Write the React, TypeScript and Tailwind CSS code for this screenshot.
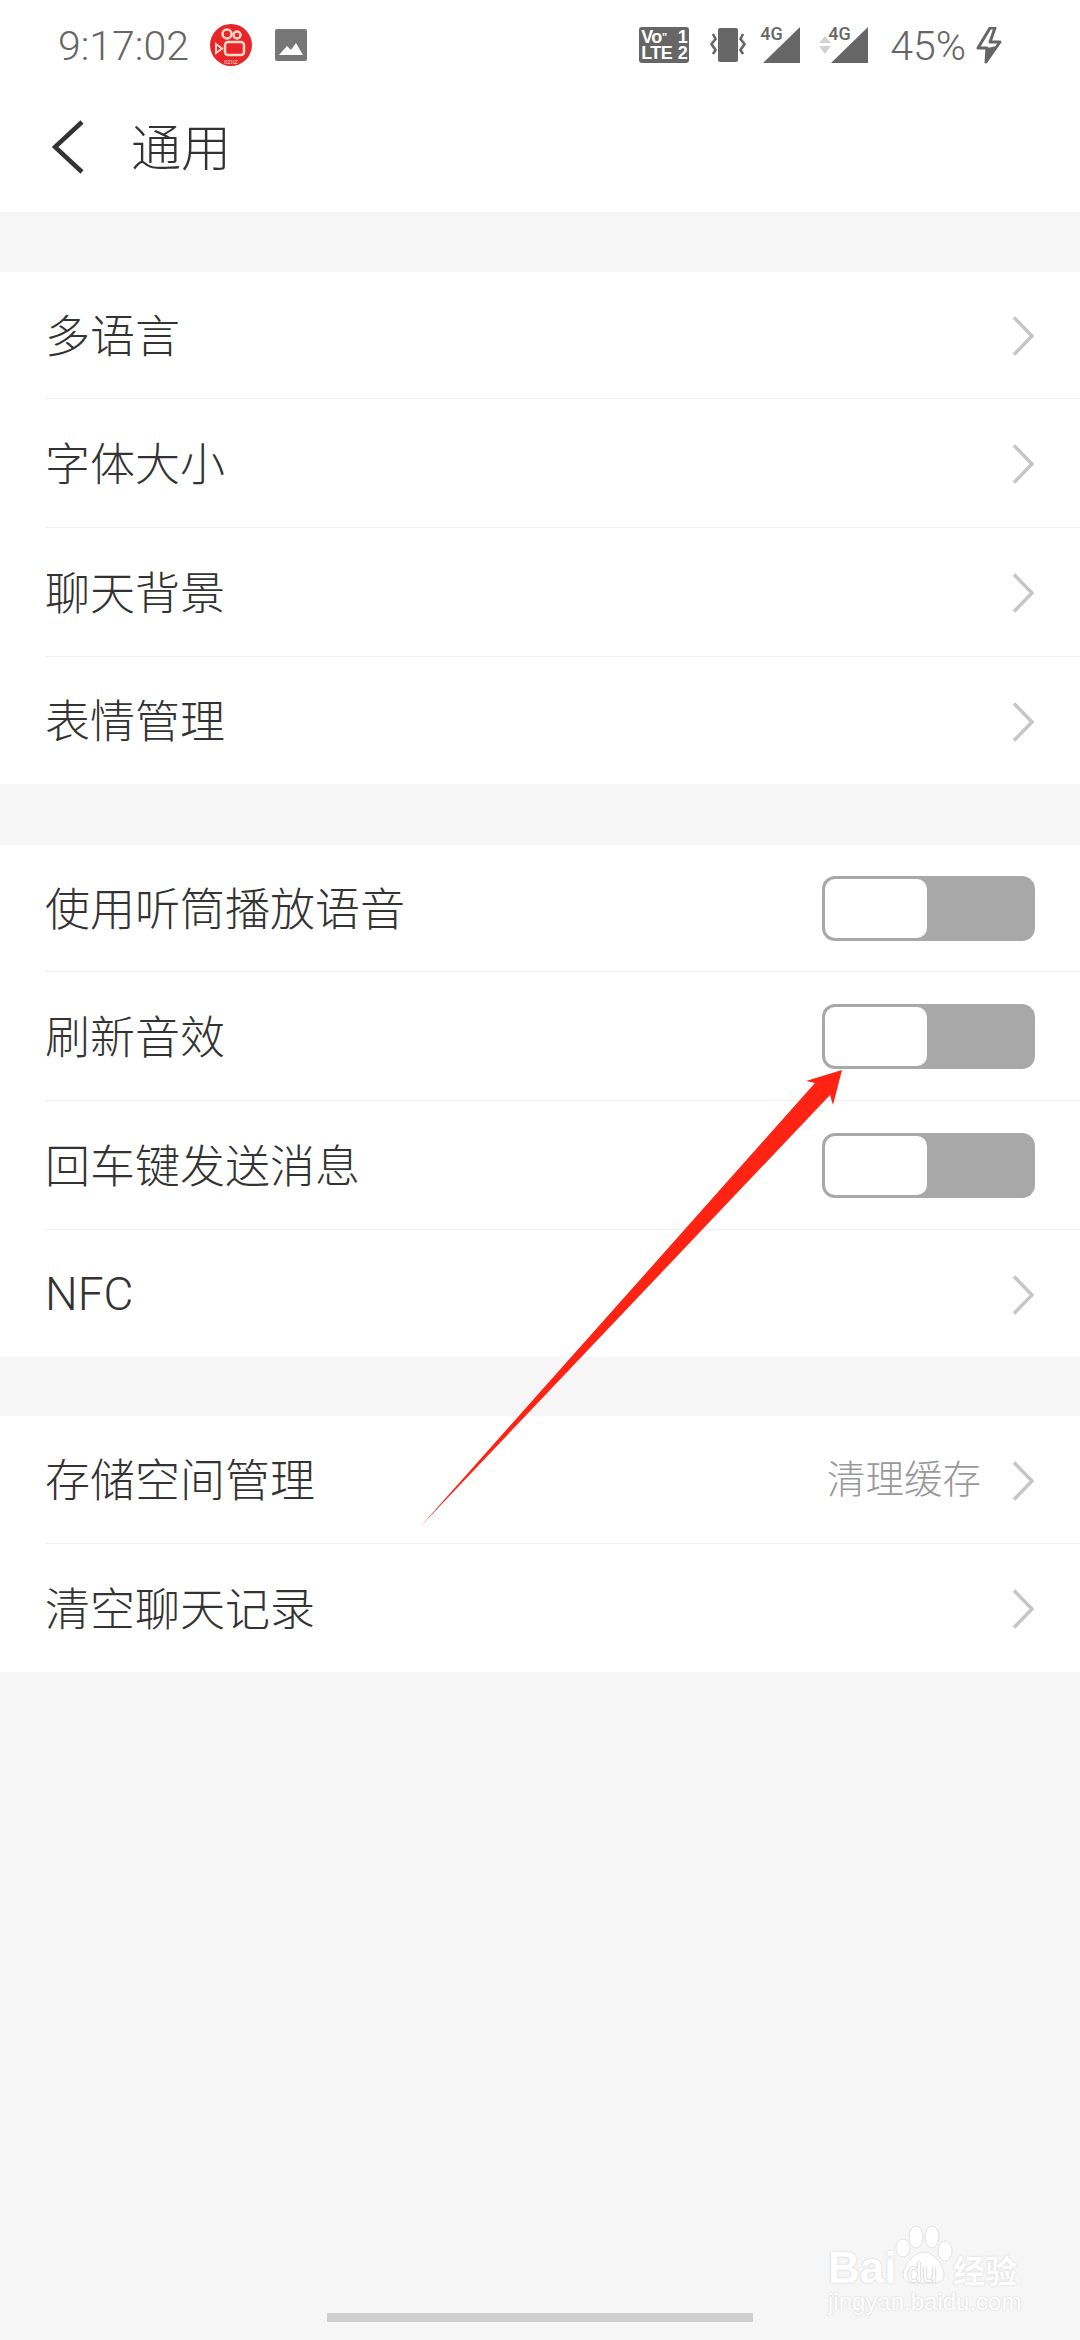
const rowText = "text-[45px] font-light text-[#333333]";

function Chevron() {
  return (
    <svg width="24" height="40" viewBox="0 0 24 40" fill="none" className="shrink-0 mt-[2px]">
      <path d="M3 1.5 L21 20 L3 38.5" stroke="#c6c6c6" strokeWidth="3.5" />
    </svg>
  );
}

function Toggle() {
  return (
    <div className="w-[213px] h-[65px] rounded-[13px] bg-[#a8a8a8] p-[3px]">
      <div className="w-[102px] h-full rounded-[10px] bg-white" />
    </div>
  );
}

function Row({ label, note, toggle, last, h = "h-[128px]", latin }: { label: string; note?: string; toggle?: boolean; last?: boolean; h?: string; latin?: boolean }) {
  return (
    <div className="pl-[45px]">
      <div className={h + " flex items-center pr-[45px] " + (last ? "" : "border-b border-[#f0f0f0] box-content")}>
        <span className={rowText + " flex-1 leading-none " + (latin ? "font-['Roboto',sans-serif] text-[46px]" : "pb-[4px]")}>{label}</span>
        {note && <span className="text-[38.5px] font-light text-[#999999] mr-[30px] leading-none pb-[6px]">{note}</span>}
        {toggle ? <Toggle /> : <Chevron />}
      </div>
    </div>
  );
}

function Signal({ className }: { className?: string }) {
  return (
    <div className={"relative w-[38px] h-[38px] " + (className ?? "")}>
      <svg width="38" height="38" viewBox="0 0 38 38" className="absolute inset-0">
        <path d="M0 37 L37 1 L37 37 Z" fill="#666666" />
      </svg>
      <span className="absolute left-[-3px] top-[-2px] text-[18px] font-medium text-[#666666] leading-[20px] font-['Roboto',sans-serif]">4G</span>
    </div>
  );
}

function StatusBar() {
  return (
    <div className="h-[90px] flex items-center pl-[58px] pr-[78px] text-[#666666]">
      <span className="text-[41px] font-light leading-none pt-[3px] font-['Roboto',sans-serif]">9:17:02</span>
      <svg width="42" height="42" viewBox="0 0 42 42" className="ml-[21px]">
        <circle cx="21" cy="21" r="21" fill="#e8262a" />
        <circle cx="17" cy="10" r="4.5" fill="none" stroke="#ffd9c8" strokeWidth="2.5" />
        <circle cx="27" cy="11" r="3.5" fill="none" stroke="#ffd9c8" strokeWidth="2.5" />
        <rect x="15" y="18" width="19" height="13" rx="3" fill="none" stroke="#ffd9c8" strokeWidth="2.5" />
        <path d="M6 20 L12 24.5 L6 29 Z" fill="none" stroke="#ffd9c8" strokeWidth="2" />
        <text x="21" y="40" textAnchor="middle" fontSize="6" fill="#ffd9c8" fontFamily="Liberation Sans">IIZIIZ</text>
      </svg>
      <svg width="32" height="32" viewBox="0 0 32 32" className="ml-[23px]">
        <rect width="32" height="32" rx="2" fill="#777777" />
        <path d="M4 26 L12 17 L16 21 L21 14 L28 26 Z" fill="#ffffff" />
      </svg>

      <div className="ml-auto flex items-center">
        <div className="w-[50px] h-[36px] rounded-[3px] bg-[#666666] text-white font-bold text-[18px] leading-[16px] px-[2px] py-[2px] tracking-[-0.5px] font-['Liberation_Sans',sans-serif]">
          <div className="flex justify-between"><span>Vo<span className="text-[11px] align-top">"</span></span><span>1</span></div>
          <div className="flex justify-between"><span>LTE</span><span>2</span></div>
        </div>
        <svg width="38" height="34" viewBox="0 0 38 34" fill="none" className="ml-[20px]">
          <rect x="9" y="0" width="20" height="34" rx="2" fill="#666666" />
          <path d="M4 6 L6.5 11 L2.5 16 L6.5 22 L4 26" stroke="#666666" strokeWidth="2.6" />
          <path d="M34 6 L31.5 11 L35.5 16 L31.5 22 L34 26" stroke="#666666" strokeWidth="2.6" />
        </svg>
        <Signal className="ml-[16px]" />
        <svg width="12" height="18" viewBox="0 0 12 18" className="ml-[18px]">
          <path d="M6 0 L12 7 L0 7 Z M0 10 L12 10 L6 18 Z" fill="#d2d2d2" />
        </svg>
        <Signal />
        <span className="ml-[21px] text-[41px] font-light leading-none pt-[3px] font-['Roboto',sans-serif]">45%</span>
        <svg width="27" height="37" viewBox="0 0 27 37" fill="none" className="ml-[9px]">
          <path d="M15 1 L3 21 L12 21 L11 35 L25 15 L15 15 L20 1 Z" stroke="#666666" strokeWidth="3" strokeLinejoin="round" fill="none" />
          <path d="M12 21 L11 36 L22 19 Z" fill="#666666" />
        </svg>
      </div>
    </div>
  );
}

export default function App() {
  return (
    <div className="relative w-[1080px] h-[2340px] overflow-hidden bg-[#f6f6f6] font-['Noto_Sans_CJK_SC','Noto_Sans',sans-serif]">
      <div className="bg-white h-[212px]">
        <StatusBar />
        <div className="h-[114px] flex items-center pl-[52px]">
          <svg width="32" height="54" viewBox="0 0 32 54" fill="none">
            <path d="M30 2 L3 27 L30 52" stroke="#333333" strokeWidth="4.5" />
          </svg>
          <span className="ml-[47px] text-[50px] font-light text-[#333333] leading-none pb-[6px]">通用</span>
        </div>
      </div>

      <div className="mt-[60px] bg-white">
        <Row label="多语言" h="h-[126px]" />
        <Row label="字体大小" />
        <Row label="聊天背景" />
        <Row label="表情管理" last h="h-[127px]" />
      </div>

      <div className="mt-[61px] bg-white">
        <Row label="使用听筒播放语音" toggle h="h-[126px]" />
        <Row label="刷新音效" toggle />
        <Row label="回车键发送消息" toggle />
        <Row label="NFC" last latin h="h-[127px]" />
      </div>

      <div className="mt-[59px] bg-white">
        <Row label="存储空间管理" note="清理缓存" h="h-[127px]" />
        <Row label="清空聊天记录" last />
      </div>

      {/* red annotation arrow */}
      <svg width="1080" height="2340" viewBox="0 0 1080 2340" className="absolute inset-0 pointer-events-none">
        <path d="M842 1070 L806 1081 L815 1083 L420 1527 L830 1095 L833 1105 Z" fill="#ff2314" />
      </svg>

      {/* watermark */}
      <div className="absolute left-[828px] top-[2224px] w-[240px] h-[100px] text-white [text-shadow:0_0_2px_#c8c8c8]">
        <svg width="58" height="61" viewBox="0 0 58 61" className="absolute left-[67px] top-[0px]">
          <g fill="#ffffff" stroke="#e2e2e2" strokeWidth="1">
            <ellipse cx="8" cy="24" rx="7" ry="9" />
            <ellipse cx="21" cy="13" rx="7" ry="11" />
            <ellipse cx="37" cy="13" rx="7" ry="11" />
            <ellipse cx="50" cy="27" rx="7" ry="10" />
            <path d="M29 28 C39 28 49 42 49 51 C49 61 37 59 29 59 C19 59 8 61 8 51 C8 42 19 28 29 28 Z" />
          </g>
        </svg>
        <span className="absolute left-[0px] top-[22px] text-[44px] leading-[44px] font-bold font-['Liberation_Sans',sans-serif]">Bai</span>
        <span className="absolute left-[79px] top-[34px] text-[27px] leading-[30px] text-white [text-shadow:0_0_1.5px_#8c8c8c] font-['Liberation_Sans',sans-serif]">du</span>
        <span className="absolute left-[125px] top-[26px] text-[32px] leading-[38px] font-bold">经验</span>
        <span className="absolute left-[0px] top-[65px] text-[24px] leading-[26px] font-['Liberation_Sans',sans-serif]">jingyan.baidu.com</span>
      </div>

      {/* home bar */}
      <div className="absolute left-[327px] top-[2313px] w-[426px] h-[9px] bg-[#cfcfcf]" />
    </div>
  );
}
